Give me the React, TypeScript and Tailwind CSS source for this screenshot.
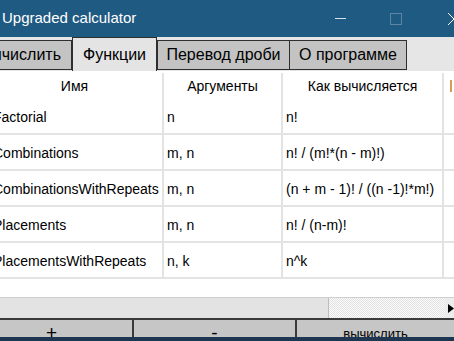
import React from "react";

type Fn = {
	name: string;
	args: string;
	formula: string;
};

const rows: Fn[] = [
	{ name: "Factorial", args: "n", formula: "n!" },
	{ name: "Combinations", args: "m, n", formula: "n! / (m!*(n - m)!)" },
	{ name: "CombinationsWithRepeats", args: "m, n", formula: "(n + m - 1)! / ((n -1)!*m!)" },
	{ name: "Placements", args: "m, n", formula: "n! / (n-m)!" },
	{ name: "PlacementsWithRepeats", args: "n, k", formula: "n^k" },
];

const font = { fontFamily: '"Liberation Sans", Arial, sans-serif' };

export default function App() {
	return (
		<div
			className="w-[454px] h-[341px] overflow-hidden flex flex-col bg-[#e6e6e6] text-black"
			style={font}
		>
			{/* title bar */}
			<div className="h-[37px] shrink-0 bg-[#1f5a82] flex items-center text-white">
				<span className="pl-[2px] text-[15px] flex-1">Upgraded calculator</span>
				<span className="w-[11px] h-[1px] bg-[#d8e2ea] mr-[44px]" />
				<span className="w-[12px] h-[12px] border border-[#5f84a4] mr-[46px]" />
				<svg width="6" height="12" viewBox="0 0 6 12">
					<path d="M0 0 L6 6 M0 12 L6 6" stroke="white" strokeWidth="1" fill="none" />
				</svg>
			</div>

			{/* tabs */}
			<div className="h-[34px] shrink-0 flex items-start text-[16px] bg-[#e6e6e6]">
				<div className="-ml-[20px] w-[92px] mt-[3px] h-[30px] border border-[#2e2e2e] bg-[#c3c3c3] flex items-center justify-end pr-[10px]">
					Вычислить
				</div>
				<div className="w-[85px] h-[34px] border border-b-0 border-[#2e2e2e] bg-[#e4e4e4] flex items-center justify-center">
					Функции
				</div>
				<div className="w-[133px] mt-[3px] h-[30px] border border-[#2e2e2e] bg-[#c3c3c3] flex items-center justify-center">
					Перевод дроби
				</div>
				<div className="w-[117px] mt-[3px] h-[30px] border border-l-0 border-[#2e2e2e] bg-[#c3c3c3] flex items-center justify-center">
					О программе
				</div>
			</div>

			{/* table */}
			<div className="h-[226px] shrink-0 bg-white overflow-hidden text-[14px]">
				<div className="-ml-[13px] w-[480px]">
					<div className="flex h-[28px] pt-[2px]">
						<div className="w-[177px] border-r-2 border-[#e3e3e3] flex items-center justify-center">Имя</div>
						<div className="w-[119px] border-r-2 border-[#e3e3e3] flex items-center justify-center">Аргументы</div>
						<div className="w-[161px] border-r-2 border-[#e3e3e3] flex items-center justify-center">Как вычисляется</div>
						<div className="flex-1 flex items-center pl-[6px]">
							<span className="w-[2px] h-[12px] bg-[#d99b5c]" />
						</div>
					</div>
					{rows.map((r) => (
						<div key={r.name} className="flex h-[36px] border-b-2 border-[#e3e3e3]">
							<div className="w-[177px] border-r-2 border-[#e3e3e3] flex items-center pl-[6px] pt-[3px] whitespace-nowrap">
								{r.name}
							</div>
							<div className="w-[119px] border-r-2 border-[#e3e3e3] flex items-center pl-[3px] pt-[3px]">{r.args}</div>
							<div className="w-[161px] border-r-2 border-[#e3e3e3] flex items-center pl-[3px] pt-[3px] whitespace-nowrap">
								{r.formula}
							</div>
							<div className="flex-1" />
						</div>
					))}
				</div>
			</div>

			{/* horizontal scrollbar */}
			<div className="h-[21px] shrink-0 flex border-t border-[#cfcfcf] bg-[#e6e6e6]">
				<div className="w-[329px] border-r border-[#bdbdbd] bg-[#e3e3e3]" />
				<div
					className="w-[116px]"
					style={{
						backgroundColor: "#f2f2f2",
						backgroundImage: "repeating-conic-gradient(#e2e2e2 0 25%, #fafafa 0 50%)",
						backgroundSize: "2px 2px",
					}}
				/>
				<div className="flex-1 flex items-center pl-[3px] bg-[#ececec]">
					<svg width="6" height="9" viewBox="0 0 6 9">
						<path d="M0 0 L6 4.5 L0 9 Z" fill="black" />
					</svg>
				</div>
			</div>

			{/* buttons */}
			<div className="h-[19px] shrink-0 flex border-t-2 border-[#3a3a3a] bg-[#c6c6c6] overflow-hidden">
				<div className="-ml-[29px] w-[163px] border-r-2 border-[#3a3a3a] flex justify-center pt-[4px] text-[19px] leading-[18px]">
					+
				</div>
				<div className="w-[163px] border-r-2 border-[#3a3a3a] flex justify-center pt-[4px] text-[19px] leading-[18px]">
					-
				</div>
				<div className="flex-1 flex justify-center pt-[7px] text-[13px] leading-[13px]">вычислить</div>
			</div>
			<div className="flex-1 bg-[#1f3650]" />
		</div>
	);
}
